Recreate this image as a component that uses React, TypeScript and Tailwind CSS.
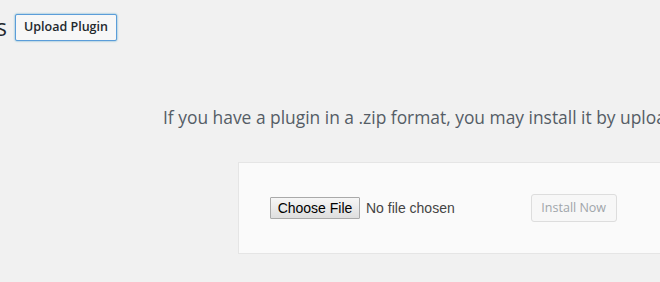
export default function App() {
  return (
    <div className="w-[660px] h-[282px] overflow-hidden bg-[#f1f1f1] font-['Open_Sans','Noto_Sans',sans-serif] text-[#23282d]">
      <div className="flex items-center pt-[14px] h-[41px]">
        <div className="w-[7px] flex justify-end">
          <h1 className="whitespace-nowrap text-[23px] font-normal leading-[27px]">Add Plugins</h1>
        </div>
        <button className="ml-[8px] h-[27px] w-[102px] rounded-[2px] border border-[#5b9dd9] bg-[#f7f7f7] text-[12.5px] font-semibold text-[#23282d] shadow-[0_0_2px_rgba(30,140,190,0.8)]">
          Upload Plugin
        </button>
      </div>
      <p className="mt-[63px] pl-[163px] whitespace-nowrap text-[17.4px] leading-[26px] text-[#555d66]">
        If you have a plugin in a .zip format, you may install it by uploading it here.
      </p>
      <div className="mt-[32px] ml-[238px] w-[500px] h-[92px] border border-[#e5e5e5] bg-[#fafafa] flex items-center pl-[31px]">
        <div className="flex items-center">
          <button className="h-[22px] w-[90px] border border-[#a9a9a9] rounded-[1px] bg-[linear-gradient(#f6f6f6,#dedede)] font-['Liberation_Sans',Arial,sans-serif] text-[14px] text-black leading-none">
            Choose File
          </button>
          <span className="ml-[6px] font-['Liberation_Sans',Arial,sans-serif] text-[14px] text-[#444]">No file chosen</span>
        </div>
        <button disabled className="ml-[76px] h-[28px] w-[86px] rounded-[3px] border border-[#ddd] bg-[#f7f7f7] text-[12.5px] text-[#a0a5aa]">
          Install Now
        </button>
      </div>
    </div>
  );
}
